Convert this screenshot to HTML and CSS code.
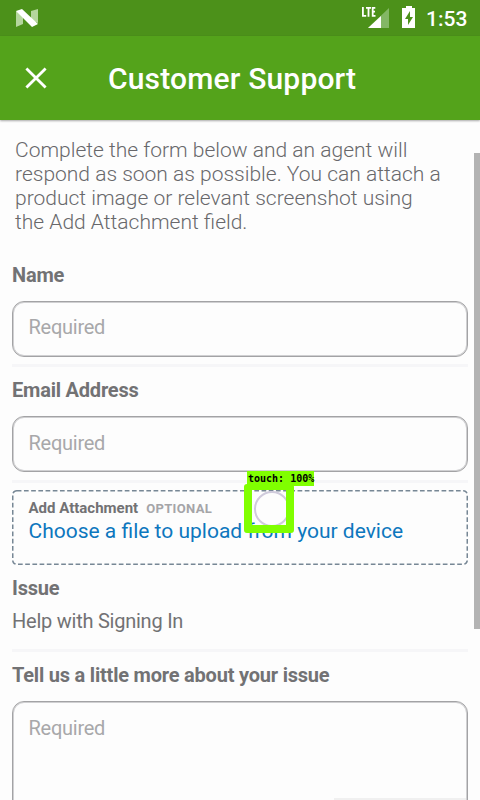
FILE: index.html
```html
<!DOCTYPE html>
<html lang="en">
<head>
<meta charset="utf-8">
<title>Customer Support</title>
<link rel="stylesheet" href="styles.css">
</head>
<body>
<div class="screen">
  <header class="status">
    <svg class="logo" width="24" height="20" viewBox="0 0 24 20">
      <path fill="#b5d69d" d="M1 3 8 7v9l-7 3zM16 3l7-2v14l-7-3z"/>
      <path fill="#fff" d="M1 3 7 1l16 15-6 3z"/>
    </svg>
    <svg class="indicators" width="60" height="24" viewBox="0 0 60 24">
      <path fill="#83b765" d="M28 2v20H7z"/>
      <path fill="#fff" d="M20 10v12H7z"/>
      <path fill="none" stroke="#fff" stroke-width="1.8" d="M1.9 1v8.8h3.3M5 1.9h5M7.5 2v8.7M14.3 1.9h-2.6v7.9h2.8M11.7 5.7h2.3"/>
      <path fill="#fff" d="M41 2h4V0h6v2h3v20H41z"/>
      <path fill="#4c911a" d="m49 5-5 8h3v6l5-8h-3z"/>
    </svg>
    <span class="clock">1:53</span>
  </header>
  <div class="appbar">
    <svg class="close" width="22" height="22" viewBox="0 0 22 22">
      <path d="M1.4 1.4 20.6 20.6M20.6 1.4 1.4 20.6"/>
    </svg>
    <h1>Customer Support</h1>
  </div>
  <main class="form">
    <p class="intro">Complete the form below and an agent will<br>respond as soon as possible. You can attach a<br>product image or relevant screenshot using<br>the Add Attachment field.</p>
    <section class="field name">
      <label>Name</label>
      <div class="input">Required</div>
    </section>
    <section class="field email">
      <label>Email Address</label>
      <div class="input">Required</div>
    </section>
    <section class="attach">
      <svg class="dashes" width="456" height="76" viewBox="0 0 456 76">
        <rect x=".75" y=".75" width="454.5" height="73.5" rx="4"/>
      </svg>
      <div class="attach-head"><b>Add Attachment</b><span>OPTIONAL</span></div>
      <a class="choose">Choose a file to upload from your device</a>
      <div class="touch">
        <div class="touch-label">touch: 100%</div>
        <div class="touch-box"><i></i></div>
      </div>
    </section>
    <section class="issue">
      <label>Issue</label>
      <div class="value">Help with Signing In</div>
    </section>
    <section class="more">
      <label>Tell us a little more about your issue</label>
      <div class="input area">Required</div>
    </section>
    <div class="scrollbar"></div>
    <div class="edge"></div>
  </main>
</div>
</body>
</html>
```

FILE: styles.css
```css
* { box-sizing: border-box; }
body { margin: 0; font-family: Roboto, sans-serif; color: #727274; }
svg { display: block; }
.screen { width: 480px; height: 800px; overflow: hidden; position: relative; background: #fdfdfd; display: flex; flex-direction: column; }
.status { height: 36px; flex: none; background: #4c911a; display: flex; align-items: flex-start; padding: 8px 12px 0 15px; }
.indicators { margin: -2px 0 0 auto; }
.clock { color: #fff; font-size: 21px; font-weight: 500; line-height: 24px; margin: -1px 0 0 5px; width: 42px; white-space: nowrap; }
.appbar { height: 84px; flex: none; background: #54a31b; display: flex; align-items: center; padding-left: 25px; box-shadow: 0 1px 2px #0005; position: relative; }
.close path { fill: none; stroke: #fff; stroke-width: 2.8; }
h1 { margin: 2px 0 0 61px; color: #fff; font-size: 30px; font-weight: 500; line-height: 36px; letter-spacing: .17px; white-space: nowrap; }
.form { flex: 1; min-height: 0; padding: 18px 12px 0; }
.intro { margin: 0 0 0 3px; height: 120px; font-size: 21px; line-height: 24px; font-weight: 300; color: #68686b; white-space: nowrap; }
label { display: block; font-size: 20px; line-height: 24px; font-weight: 700; letter-spacing: -.21px; white-space: nowrap; }
.field { height: 116px; padding-top: 5px; }
.field label { margin-bottom: 14px; }
.field .input { height: 56px; }
.field::after { content: ""; display: block; height: 3px; margin-top: 8px; background: #f6f6f8; }
.input { border: 1px solid #a3a3a5; box-shadow: inset 0 0 0 1px #d0d0d2; border-radius: 12px; padding: 13px 15.5px 0; font-size: 20px; line-height: 26px; letter-spacing: -.26px; color: #a8a8aa; }
.name { height: 115px; }
.name .input { padding-top: 12px; }
.name::after { margin-top: 7px; }
.attach { height: 76px; margin-top: 1px; position: relative; padding: 8px 16.5px; }
.dashes { position: absolute; left: 0; top: 0; }
.dashes rect { fill: none; stroke: #778795; stroke-width: 1.5; stroke-dasharray: 4.7 2.5; }
.attach-head { display: flex; align-items: baseline; gap: 8px; font-size: 15px; line-height: 20px; }
.attach-head span { font-size: 13px; font-weight: 700; letter-spacing: .35px; color: #a5a5a8; }
.choose { display: block; font-size: 21px; line-height: 24px; color: #0d77be; white-space: nowrap; }
.touch { position: absolute; left: 232px; top: -19px; }
.touch-label { background: #80ff00; margin-left: 3px; width: 67px; height: 15px; font: bold 10px/15px "DejaVu Sans Mono", monospace; color: #000; padding-left: 1px; white-space: nowrap; }
.touch-box { width: 50px; height: 49px; border: 8px solid #80ff00; border-top-width: 6px; border-radius: 3px; margin-top: -2px; overflow: hidden; }
.touch-box i { display: block; width: 36px; height: 36px; border: 2px solid #d0cbdc; border-radius: 50%; margin: 1px 0 0 2px; background: #fdfdfd; }
.issue { height: 86px; padding-top: 10px; border-bottom: 3px solid #f6f6f8; }
.value { font-size: 20px; line-height: 26px; letter-spacing: -.24px; margin-top: 8px; white-space: nowrap; }
.more { padding-top: 11px; }
.more .area { margin-top: 14px; height: 130px; }
.scrollbar { position: absolute; left: 474px; top: 153px; width: 6px; height: 476px; background: #b3b3b3; }
.edge { position: absolute; left: 334px; top: 798px; width: 132px; height: 2px; background: #f0f0f0; }
```
